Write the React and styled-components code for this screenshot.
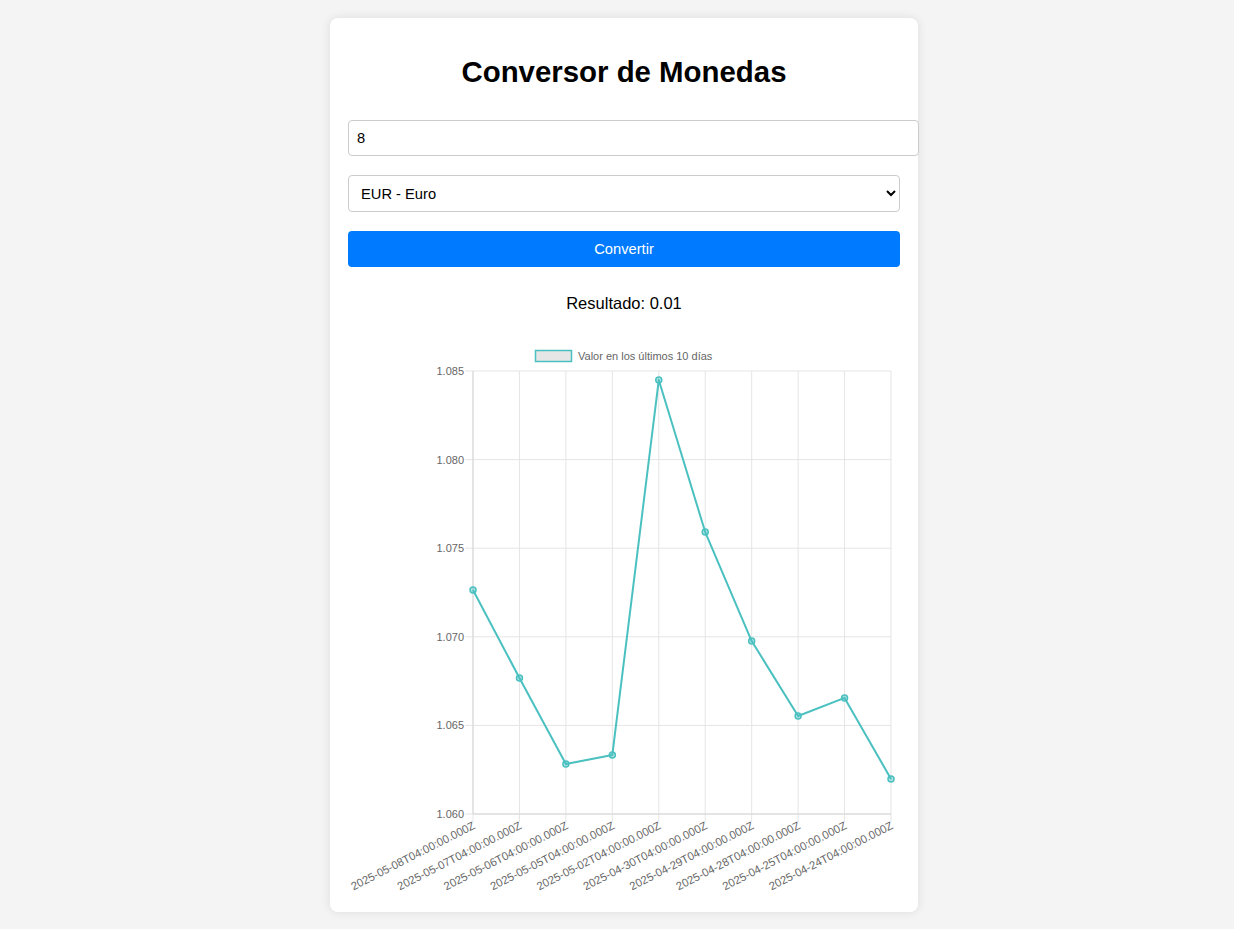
import React, { useState } from 'react';
import styled, { createGlobalStyle } from 'styled-components';

const GlobalStyle = createGlobalStyle`
  body {
    margin: 0;
    background: #f4f4f4;
    font-family: "Liberation Sans", Arial, sans-serif;
  }
`;

const Page = styled.div`
  display: flex;
  justify-content: center;
  padding: 18px 0 17px 14px;
`;

const Card = styled.div`
  width: 552px;
  padding: 20px 18px 12px;
  background: #fff;
  border-radius: 8px;
  box-shadow: 0 0 10px rgba(0, 0, 0, 0.1);
  display: flex;
  flex-direction: column;
`;

const Title = styled.h1`
  margin: 17px 0 31px;
  font-size: 29.4px;
  font-weight: bold;
  text-align: center;
  color: #000;
`;

const Form = styled.div`
  display: flex;
  flex-direction: column;
  gap: 19px;
`;

const Input = styled.input`
  width: calc(100% + 1px);
  height: 18px;
  padding: 8px;
  font-family: inherit;
  font-size: 14.7px;
  border: 1px solid #ccc;
  border-radius: 4px;
  outline: none;
`;

const Select = styled.select`
  width: 100%;
  height: 37px;
  padding: 0 8px;
  font-family: inherit;
  font-size: 14.7px;
  border: 1px solid #ccc;
  border-radius: 4px;
  background: #fff;
  color: #000;
`;

const Button = styled.button`
  width: 100%;
  height: 36px;
  border: none;
  border-radius: 4px;
  background: #007bff;
  color: #fff;
  font-family: inherit;
  font-size: 14.7px;
  cursor: pointer;
`;

const Result = styled.p`
  margin: 27px 0 27px;
  font-size: 16.5px;
  line-height: 19px;
  text-align: center;
  color: #000;
`;

const ChartBox = styled.svg`
  display: block;
  width: 552px;
  height: 560px;
`;

const TEAL = 'rgb(75, 192, 192)';
const GRID = '#e5e5e5';
const TICK_TEXT = '#666';

const data = [
  { label: '2025-05-08T04:00:00.000Z', value: 1.07264 },
  { label: '2025-05-07T04:00:00.000Z', value: 1.06768 },
  { label: '2025-05-06T04:00:00.000Z', value: 1.06282 },
  { label: '2025-05-05T04:00:00.000Z', value: 1.06333 },
  { label: '2025-05-02T04:00:00.000Z', value: 1.08449 },
  { label: '2025-04-30T04:00:00.000Z', value: 1.07591 },
  { label: '2025-04-29T04:00:00.000Z', value: 1.06976 },
  { label: '2025-04-28T04:00:00.000Z', value: 1.06553 },
  { label: '2025-04-25T04:00:00.000Z', value: 1.06655 },
  { label: '2025-04-24T04:00:00.000Z', value: 1.06198 },
];

const plot = { left: 125, right: 543, top: 31, bottom: 474 };
const yMin = 1.06;
const yMax = 1.085;
const yTicks = [1.085, 1.08, 1.075, 1.07, 1.065, 1.06];

const xAt = (i) => plot.left + (i * (plot.right - plot.left)) / (data.length - 1);
const yAt = (v) => plot.bottom - ((v - yMin) / (yMax - yMin)) * (plot.bottom - plot.top);

const HistoryChart = () => {
  const points = data.map((d, i) => `${xAt(i)},${yAt(d.value)}`).join(' ');
  return (
    <ChartBox viewBox="0 0 552 560">
      <rect x="187.5" y="10.5" width="36" height="11" fill="#e6e6e6" stroke={TEAL} strokeWidth="1.5" />
      <text x="230" y="19.5" fontSize="11" fill={TICK_TEXT} fontFamily="Liberation Sans, Arial, sans-serif">
        Valor en los últimos 10 días
      </text>

      {yTicks.map((t) => (
        <g key={t}>
          <line x1={plot.left - 8} x2={plot.right} y1={yAt(t)} y2={yAt(t)} stroke={GRID} strokeWidth="1" />
          <text
            x={plot.left - 9}
            y={yAt(t) + 4}
            fontSize="11"
            textAnchor="end"
            fill={TICK_TEXT}
            fontFamily="Liberation Sans, Arial, sans-serif"
          >
            {t.toFixed(3)}
          </text>
        </g>
      ))}

      {data.map((d, i) => (
        <g key={d.label}>
          <line x1={xAt(i)} x2={xAt(i)} y1={plot.top} y2={plot.bottom + 8} stroke={GRID} strokeWidth="1" />
          <text
            x={xAt(i) + 3}
            y={plot.bottom + 14}
            fontSize="11.3"
            textAnchor="end"
            fill={TICK_TEXT}
            fontFamily="Liberation Sans, Arial, sans-serif"
            transform={`rotate(-27 ${xAt(i) + 3} ${plot.bottom + 14})`}
          >
            {d.label}
          </text>
        </g>
      ))}

      <line x1={plot.left} x2={plot.left} y1={plot.top} y2={plot.bottom} stroke="#d6d6d6" />
      <line x1={plot.left} x2={plot.right} y1={plot.bottom} y2={plot.bottom} stroke="#d6d6d6" />

      <polyline points={points} fill="none" stroke={TEAL} strokeWidth="2" strokeLinejoin="round" />
      {data.map((d, i) => (
        <circle
          key={d.label}
          cx={xAt(i)}
          cy={yAt(d.value)}
          r="3"
          fill="rgba(75, 192, 192, 0.45)"
          stroke={TEAL}
          strokeWidth="1.5"
        />
      ))}
    </ChartBox>
  );
};

const App = () => {
  const [amount, setAmount] = useState('8');
  const [currency, setCurrency] = useState('EUR');

  return (
    <>
      <GlobalStyle />
      <Page>
        <Card>
          <Title>Conversor de Monedas</Title>
          <Form>
            <Input type="number" value={amount} onChange={(e) => setAmount(e.target.value)} />
            <Select value={currency} onChange={(e) => setCurrency(e.target.value)}>
              <option value="USD">USD - Dólar estadounidense</option>
              <option value="EUR">EUR - Euro</option>
              <option value="GBP">GBP - Libra esterlina</option>
              <option value="JPY">JPY - Yen japonés</option>
            </Select>
            <Button>Convertir</Button>
          </Form>
          <Result>Resultado: 0.01</Result>
          <HistoryChart />
        </Card>
      </Page>
    </>
  );
};

export default App;
